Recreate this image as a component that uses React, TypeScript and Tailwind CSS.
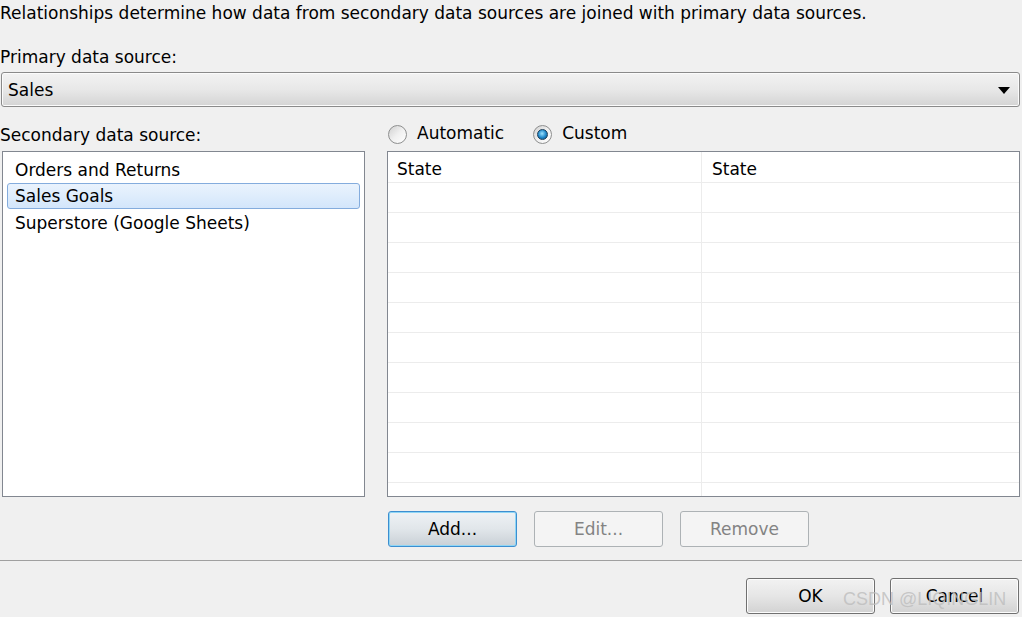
import React from 'react';

const font = { fontFamily: '"DejaVu Sans", Verdana, sans-serif' };

function Radio({ checked, label }: { checked?: boolean; label: string }) {
  return (
    <label className="flex items-center gap-[10px]">
      <span className="grid h-[19px] w-[19px] place-items-center rounded-full border border-[#8e8f8f] bg-gradient-to-br from-[#d0d0d0] via-[#f0f0f0] to-[#ffffff]">
        {checked && (
          <span className="h-[11px] w-[11px] rounded-full border border-[#1b3e5a] bg-[radial-gradient(circle_at_45%_40%,#9be2ff,#1d86c9_55%,#0d4470)]" />
        )}
      </span>
      <span>{label}</span>
    </label>
  );
}

function Button({ label, variant = 'normal' }: { label: string; variant?: 'normal' | 'focus' | 'disabled' }) {
  const base = 'h-[36px] w-[129px] rounded-[3px] flex items-center justify-center pt-[2px]';
  if (variant === 'disabled') {
    return <div className={`${base} border border-[#adb2b5] bg-[#f4f4f4] text-[#838383]`}>{label}</div>;
  }
  if (variant === 'focus') {
    return (
      <div className={`${base} border border-[#3c8ed0] bg-gradient-to-b from-[#eef2f5] via-[#e1e6ea] to-[#c9d0d6] shadow-[inset_0_0_0_1px_#8fd6f5] text-black`}>
        {label}
      </div>
    );
  }
  return (
    <div className={`${base} border border-[#707070] bg-gradient-to-b from-[#f2f2f2] via-[#e6e6e6] to-[#d2d2d2] shadow-[inset_0_0_0_1px_#fcfcfc] text-black`}>
      {label}
    </div>
  );
}

export default function App() {
  const sources = ['Orders and Returns', 'Sales Goals', 'Superstore (Google Sheets)'];
  const rows = Array.from({ length: 11 });

  return (
    <div className="relative h-[617px] w-[1022px] overflow-hidden bg-[#f0f0f0] text-[17px] text-black" style={font}>
      <div className="flex flex-col">
        <p className="h-[24px] pt-[3px] leading-[20px]">
          Relationships determine how data from secondary data sources are joined with primary data sources.
        </p>

        <p className="mt-[23px] h-[20px] leading-[20px]">Primary data source:</p>

        {/* dropdown */}
        <div className="ml-[1px] mt-[5px] flex h-[35px] w-[1019px] items-center justify-between rounded-[3px] border border-[#8a8a8a] bg-gradient-to-b from-[#f2f2f2] via-[#e8e8e8] to-[#d4d4d4] pl-[6px] pr-[9px] pt-[2px] shadow-[inset_0_0_0_1px_#fbfbfb]">
          <span>Sales</span>
          <svg width="12" height="7" viewBox="0 0 12 7">
            <path d="M0 0 H12 L6 7 Z" fill="#000" />
          </svg>
        </div>

        <div className="mt-[16px] flex gap-[23px]">
          {/* left column */}
          <div className="flex w-[364px] flex-col">
            <p className="h-[20px] pt-[2px] leading-[20px]">Secondary data source:</p>
            <div className="ml-[2px] mt-[8px] flex h-[346px] w-[363px] flex-col border border-[#828790] bg-white px-[4px] pt-[4px]">
              {sources.map((s, i) => (
                <div
                  key={s}
                  className={`flex h-[26.5px] items-center rounded-[3px] px-[7px] pt-[2px] ${
                    i === 1 ? 'border border-[#84acdd] bg-gradient-to-b from-[#eaf3fd] to-[#d3e6fb]' : 'border border-transparent'
                  }`}
                >
                  {s}
                </div>
              ))}
            </div>
          </div>

          {/* right column */}
          <div className="flex w-[633px] flex-col">
            <div className="flex h-[20px] items-center gap-[29px] pl-[1px] pt-[2px]">
              <Radio label="Automatic" />
              <Radio checked label="Custom" />
            </div>
            <div className="mt-[8px] h-[346px] overflow-hidden border border-[#828790] bg-white">
              <div className="flex h-[31px] border-b border-[#ececec]">
                <div className="flex w-[314px] items-center border-r border-[#ececec] pl-[9px] pt-[6px]">State</div>
                <div className="flex flex-1 items-center pl-[10px] pt-[6px]">State</div>
              </div>
              {rows.map((_, i) => (
                <div key={i} className="flex h-[30px] border-b border-[#ececec]">
                  <div className="w-[314px] border-r border-[#ececec]" />
                  <div className="flex-1" />
                </div>
              ))}
            </div>
            <div className="mt-[14px] flex gap-[17px] pl-[1px]">
              <Button label="Add..." variant="focus" />
              <Button label="Edit..." variant="disabled" />
              <Button label="Remove" variant="disabled" />
            </div>
          </div>
        </div>

        <div className="mt-[13px] h-[2px] w-full border-t border-[#a0a0a0] border-b-white" />

        <div className="mt-[16px] flex justify-end gap-[15px] pr-[3px]">
          <Button label="OK" />
          <Button label="Cancel" />
        </div>
      </div>

      {/* watermark */}
      <div
        className="pointer-events-none absolute left-[843px] top-[586px] text-[18px] text-[#bdbdbd]/80"
        style={{ fontFamily: '"Liberation Sans", Arial, sans-serif' }}
      >
        CSDN @LIQINGLIN
      </div>
    </div>
  );
}
